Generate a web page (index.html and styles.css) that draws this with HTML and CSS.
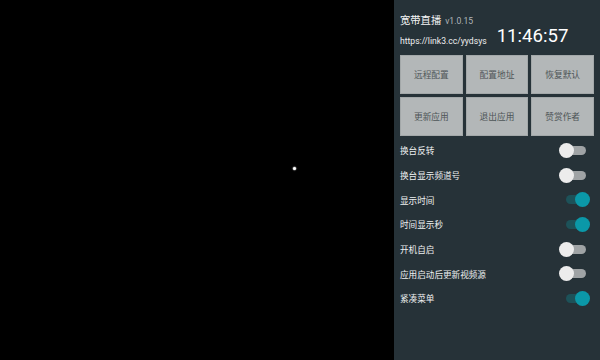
FILE: index.html
```html
<!DOCTYPE html>
<html lang="zh-CN">
<head>
    <meta charset="UTF-8">
    <meta name="viewport" content="width=device-width, initial-scale=1.0">
    <title>宽带直播</title>
    <link rel="stylesheet" href="styles.css">
</head>
<body>
    <div class="screen">
        <div class="player">
            <div class="dot"></div>
        </div>
        <div class="panel">
            <div class="header">
                <div class="info">
                    <div class="title-row">
                        <span class="title">宽带直播</span>
                        <span class="version">v1.0.15</span>
                    </div>
                    <div class="url">https://link3.cc/yydsys</div>
                </div>
                <div class="clock">11:46:57</div>
            </div>
            <div class="buttons">
                <div class="btn">远程配置</div>
                <div class="btn">配置地址</div>
                <div class="btn">恢复默认</div>
                <div class="btn">更新应用</div>
                <div class="btn">退出应用</div>
                <div class="btn">赞赏作者</div>
            </div>
            <div class="options">
                <div class="option"><span>换台反转</span><div class="switch"></div></div>
                <div class="option"><span>换台显示频道号</span><div class="switch"></div></div>
                <div class="option"><span>显示时间</span><div class="switch on"></div></div>
                <div class="option"><span>时间显示秒</span><div class="switch on"></div></div>
                <div class="option"><span>开机自启</span><div class="switch"></div></div>
                <div class="option"><span>应用启动后更新视频源</span><div class="switch"></div></div>
                <div class="option"><span>紧凑菜单</span><div class="switch on"></div></div>
            </div>
        </div>
    </div>
</body>
</html>
```

FILE: styles.css
```css
html, body {
    margin: 0;
    padding: 0;
    background-color: black;
    font-family: Roboto, "Noto Sans CJK SC", sans-serif;
}
.screen {
    width: 600px;
    height: 360px;
    display: flex;
    overflow: hidden;
}
.player {
    width: 394px;
    height: 100%;
    background-color: black;
    position: relative;
}
.dot {
    position: absolute;
    left: 293px;
    top: 167px;
    width: 3px;
    height: 3px;
    border-radius: 50%;
    background-color: white;
    box-shadow: 0 0 1px 0.5px rgba(255, 255, 255, 0.6);
}
.panel {
    flex: 1;
    background-color: #263238;
    padding: 14px 6px 0 6px;
    color: #eceff1;
}
.header {
    display: flex;
    margin-bottom: 7px;
}
.title-row {
    height: 14px;
    line-height: 14px;
    display: flex;
    align-items: baseline;
}
.title {
    font-size: 10.3px;
    color: #f5f5f5;
}
.version {
    font-size: 8.6px;
    color: #b0b6b9;
    margin-left: 4px;
}
.url {
    margin-top: 6px;
    height: 14px;
    line-height: 14px;
    font-size: 8.6px;
    color: #f0f0f0;
}
.clock {
    margin-left: 10px;
    margin-top: 11px;
    height: 22px;
    line-height: 22px;
    font-size: 18.6px;
    color: #ffffff;
}
.buttons {
    display: grid;
    grid-template-columns: repeat(3, 1fr);
    grid-auto-rows: 39px;
    gap: 3px;
}
.btn {
    background-color: #b3b7b8;
    border: 1px solid #a3a8a9;
    box-sizing: border-box;
    display: flex;
    align-items: center;
    justify-content: center;
    font-size: 8.7px;
    color: #4e5557;
}
.options {
    margin-top: 2px;
}
.option {
    height: 24.7px;
    display: flex;
    align-items: center;
    justify-content: space-between;
    padding-right: 4px;
    font-size: 8.6px;
    color: #eef0f1;
}
.switch {
    position: relative;
    width: 31px;
    height: 15px;
}
.switch::before {
    content: "";
    position: absolute;
    left: 3px;
    right: 4px;
    top: 3px;
    height: 9px;
    border-radius: 5px;
    background-color: #9fa3a5;
}
.switch::after {
    content: "";
    position: absolute;
    left: 0;
    top: 0;
    width: 15px;
    height: 15px;
    border-radius: 50%;
    background-color: #ececec;
}
.switch.on::before {
    left: 7px;
    background-color: #1d5259;
}
.switch.on::after {
    left: 16px;
    background-color: #0b98a8;
}
```
